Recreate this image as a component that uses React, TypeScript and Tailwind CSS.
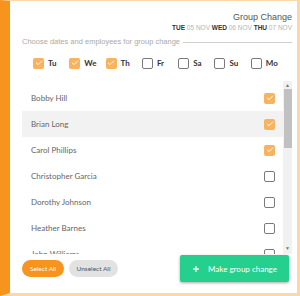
import { Check, Plus } from "lucide-react";

const days = [
  { label: "Tu", on: true },
  { label: "We", on: true },
  { label: "Th", on: true },
  { label: "Fr", on: false },
  { label: "Sa", on: false },
  { label: "Su", on: false },
  { label: "Mo", on: false },
];

const people = [
  { name: "Bobby Hill", on: true },
  { name: "Brian Long", on: true, hover: true },
  { name: "Carol Phillips", on: true },
  { name: "Christopher Garcia", on: false },
  { name: "Dorothy Johnson", on: false },
  { name: "Heather Barnes", on: false },
  { name: "John Williams", on: false },
];

function Box({ on }: { on: boolean }) {
  return on ? (
    <span className="flex h-[11px] w-[11px] items-center justify-center rounded-[2px] bg-[#f9b35f]">
      <Check className="h-[8px] w-[8px] text-white" strokeWidth={3} />
    </span>
  ) : (
    <span className="h-[11px] w-[11px] rounded-[2px] border-[1.5px] border-[#7a7a7a] bg-white" />
  );
}

export default function App() {
  return (
    <div className="flex h-[296px] w-[300px] flex-col border-t border-r-[3px] border-b-[3px] border-l-[10px] border-t-[#fcd7aa] border-r-[#fcd7aa] border-b-[#fcd7aa] border-l-[#f7941d] bg-white pr-[5px] pl-[12px] font-['Lato',sans-serif]">
      {/* Title + dates */}
      <div className="mt-[11px] text-right font-['Liberation_Sans',sans-serif]">
        <div className="text-[9px] leading-[11px] text-[#555]">Group Change</div>
        <div className="mt-[1px] text-[6.5px] leading-[8px] text-[#b5b5b5]">
          <b className="text-[#333]">TUE</b> 05 NOV <b className="text-[#333]">WED</b> 06 NOV{" "}
          <b className="text-[#333]">THU</b> 07 NOV
        </div>
      </div>

      <div className="mt-[5px] flex items-center gap-[3px] font-['Liberation_Sans',sans-serif] text-[7.5px] leading-[10px] text-[#aaa]">
        <span>Choose dates and employees for group change</span>
        <span className="h-px flex-1 bg-[#cfcfcf]" />
      </div>

      {/* Weekday picker */}
      <div className="mt-[10px] flex pl-[11px]">
        {days.map((d) => (
          <div key={d.label} className="flex w-[36.3px] items-center gap-[4px]">
            <Box on={d.on} />
            <span className="text-[8px] font-bold text-[#333]">{d.label}</span>
          </div>
        ))}
      </div>

      {/* Employees */}
      <div className="mt-[12px] flex h-[173px] overflow-hidden">
        <div className="flex-1 pt-[4px]">
          {people.map((p) => (
            <div
              key={p.name}
              className={`flex h-[26px] shrink-0 items-center justify-between pr-[8px] pl-[9px] ${p.hover ? "bg-[#f2f2f2]" : ""}`}
            >
              <span className="text-[8px] text-[#666]">{p.name}</span>
              <Box on={p.on} />
            </div>
          ))}
        </div>
        <div className="relative flex w-[9px] flex-col items-center bg-[#f1f1f1]">
          <span className="mt-[2px] text-[5px] leading-[5px] text-[#777]">▲</span>
          <span className="mt-[1px] h-[59px] w-[8px] bg-[#c1c1c1]" />
          <span className="absolute bottom-[3px] text-[5px] leading-[5px] text-[#777]">▼</span>
        </div>
      </div>

      {/* Actions */}
      <div className="mt-[1px] flex items-center justify-between pr-[3px]">
        <div className="flex gap-[5px]">
          <button className="h-[17px] w-[42px] rounded-full bg-[#f7941d] text-[6.5px] text-white">Select All</button>
          <button className="h-[17px] w-[49px] rounded-full bg-[#e2e2e2] text-[6.5px] text-[#555]">Unselect All</button>
        </div>
        <button className="flex h-[27px] w-[109px] items-center justify-center gap-[8px] rounded-[2px] bg-[#25cf8d] text-[8px] text-white shadow-[0_1px_3px_rgba(0,0,0,0.35)]">
          <Plus className="h-[8px] w-[8px]" strokeWidth={4} />
          Make group change
        </button>
      </div>
    </div>
  );
}
